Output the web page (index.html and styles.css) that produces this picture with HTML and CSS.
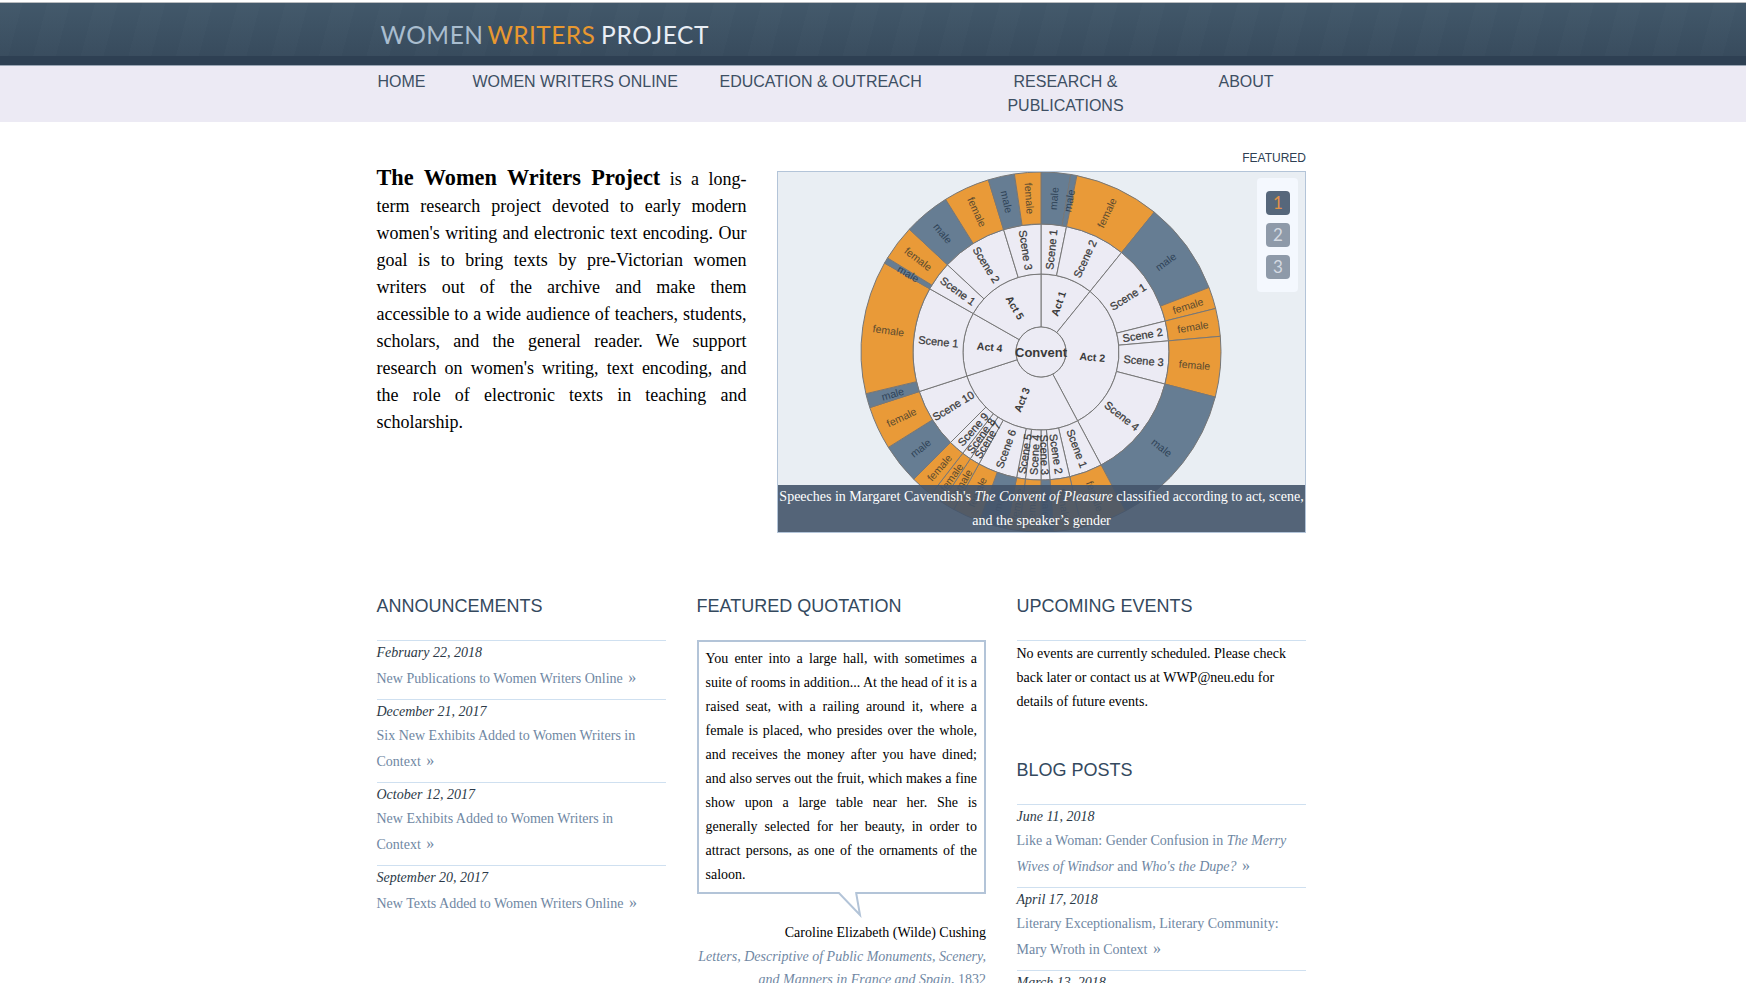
FILE: index.html
```html
<!DOCTYPE html>
<html>
<head>
  <meta charset="UTF-8">
  <title>Women Writers Project</title>
  <link rel="stylesheet" href="styles.css">
</head>
<body>
  <header class="masthead">
    <div class="wrap">
      <a class="logo" href="#"><span class="logo-women">WOMEN</span> <span class="logo-writers">WRITERS</span> <span class="logo-project">PROJECT</span></a>
    </div>
  </header>

  <nav class="main-nav">
    <ul class="wrap nav-list">
      <li><a href="#">HOME</a></li>
      <li><a href="#">WOMEN WRITERS ONLINE</a></li>
      <li><a href="#">EDUCATION &amp; OUTREACH</a></li>
      <li class="nav-wrapped"><a href="#">RESEARCH &amp; PUBLICATIONS</a></li>
      <li><a href="#">ABOUT</a></li>
    </ul>
  </nav>

  <main class="wrap">
    <section class="top-row">
      <p class="intro"><strong>The Women Writers Project</strong> is a long-term research project devoted to early modern women's writing and electronic text encoding. Our goal is to bring texts by pre-Victorian women writers out of the archive and make them accessible to a wide audience of teachers, students, scholars, and the general reader. We support research on women's writing, text encoding, and the role of electronic texts in teaching and scholarship.</p>

      <div class="featured">
        <div class="featured-label">FEATURED</div>
        <div class="slide">
          <svg id="sunburst" class="sunburst" width="527" height="360" viewBox="0 0 527 360"></svg>
          <div class="pager">
            <a class="pager-btn active" href="#">1</a>
            <a class="pager-btn" href="#">2</a>
            <a class="pager-btn" href="#">3</a>
          </div>
          <div class="caption">Speeches in Margaret Cavendish's <em>The Convent of Pleasure</em> classified according to act, scene, and the speaker’s gender</div>
        </div>
      </div>
    </section>

    <section class="columns">
      <div class="col">
        <h2>ANNOUNCEMENTS</h2>
        <div class="news-item">
          <div class="news-date">February 22, 2018</div>
          <a class="news-link news-short" href="#">New Publications to Women Writers Online&nbsp;<span class="more">»</span></a>
        </div>
        <div class="news-item">
          <div class="news-date">December 21, 2017</div>
          <a class="news-link" href="#">Six New Exhibits Added to Women Writers in Context&nbsp;<span class="more">»</span></a>
        </div>
        <div class="news-item">
          <div class="news-date">October 12, 2017</div>
          <a class="news-link" href="#">New Exhibits Added to Women Writers in Context&nbsp;<span class="more">»</span></a>
        </div>
        <div class="news-item">
          <div class="news-date">September 20, 2017</div>
          <a class="news-link news-short" href="#">New Texts Added to Women Writers Online&nbsp;<span class="more">»</span></a>
        </div>
      </div>

      <div class="col">
        <h2>FEATURED QUOTATION</h2>
        <div class="quote">
          You enter into a large hall, with sometimes a suite of rooms in addition... At the head of it is a raised seat, with a railing around it, where a female is placed, who presides over the whole, and receives the money after you have dined; and also serves out the fruit, which makes a fine show upon a large table near her. She is generally selected for her beauty, in order to attract persons, as one of the ornaments of the saloon.
          <svg class="quote-tail" width="24" height="26" viewBox="0 0 24 26"><path d="M0 0 L22 23 L18 0" fill="#fff" stroke="#b3c4d8" stroke-width="2"/></svg>
        </div>
        <div class="quote-author">Caroline Elizabeth (Wilde) Cushing</div>
        <div class="quote-source"><em>Letters, Descriptive of Public Monuments, Scenery, and Manners in France and Spain</em>, 1832</div>
      </div>

      <div class="col">
        <h2>UPCOMING EVENTS</h2>
        <p class="events">No events are currently scheduled. Please check back later or contact us at WWP@neu.edu for details of future events.</p>

        <h2 class="blog-head">BLOG POSTS</h2>
        <div class="news-item">
          <div class="news-date">June 11, 2018</div>
          <a class="news-link" href="#">Like a Woman: Gender Confusion in <em>The Merry Wives of Windsor</em> and <em>Who's the Dupe?</em>&nbsp;<span class="more">»</span></a>
        </div>
        <div class="news-item">
          <div class="news-date">April 17, 2018</div>
          <a class="news-link" href="#">Literary Exceptionalism, Literary Community: Mary Wroth in Context&nbsp;<span class="more">»</span></a>
        </div>
        <div class="news-item">
          <div class="news-date">March 13, 2018</div>
        </div>
      </div>
    </section>
  </main>

  <script src="sunburst.js"></script>
</body>
</html>
```

FILE: styles.css
```css
html {
  height: 100%;
  overflow: hidden;
}

body {
  margin: 0;
  background-color: #fff;
  color: #000;
  font-family: "Liberation Serif", serif;
}

a {
  text-decoration: none;
}

.wrap {
  width: 930.5px;
  margin-left: 376.5px;
}

/* header */

.masthead {
  height: 63px;
  border-top: 2px solid #fff;
  box-shadow: inset 0 1px 0 #b9bcbf, inset 0 -9px 0 #2e4053;
  background-color: #3c5062;
  background-image:
    repeating-linear-gradient(105deg, rgba(255, 255, 255, 0.012) 0 22px, rgba(255, 255, 255, 0) 22px 46px),
    linear-gradient(#42586a, #36495b);
}

.logo {
  display: block;
  padding-top: 18px;
  padding-left: 4px;
  font-family: Lato, sans-serif;
  font-size: 24.5px;
  line-height: 30px;
  letter-spacing: 0.65px;
  word-spacing: -3px;
  white-space: nowrap;
}

.logo-women { color: #a9bdcf; letter-spacing: 0.55px; }
.logo-writers { color: #e8982f; letter-spacing: 0.4px; }
.logo-project { color: #e9eef5; margin-left: 2px; }

/* nav */

.main-nav {
  height: 57px;
  border-top: 1px solid #9aa6b5;
  box-sizing: border-box;
  background-color: #eceaf4;
}

.nav-list {
  display: grid;
  grid-template-columns: 95px 247px 261px 238px auto;
  margin-top: 0;
  margin-bottom: 0;
  padding: 4px 0 0 1px;
  list-style: none;
  font-family: "Liberation Sans", sans-serif;
  font-size: 16px;
  line-height: 24px;
}

.nav-list a {
  color: #3d4f63;
}

.nav-wrapped {
  width: 170px;
  text-align: center;
}

/* intro + slideshow */

.top-row {
  display: flex;
  justify-content: space-between;
  padding-top: 27px;
}

.intro {
  width: 370px;
  margin: 15px 0 0;
  font-size: 18px;
  line-height: 27px;
  text-align: justify;
}

.intro strong {
  font-size: 22.3px;
}

.featured {
  width: 529px;
  margin-right: 1px;
}

.featured-label {
  margin: 1px 0 5px;
  font-family: "Liberation Sans", sans-serif;
  font-size: 12px;
  line-height: 16px;
  text-align: right;
  color: #2e4053;
}

.slide {
  position: relative;
  height: 360px;
  overflow: hidden;
  border: 1px solid #b3c4d8;
  background-color: #e9eef3;
}

.sunburst {
  display: block;
}

.sunburst text {
  font-family: "Liberation Sans", sans-serif;
  font-size: 10.5px;
  text-anchor: middle;
  dominant-baseline: central;
}

.sunburst .cell-male { fill: #667d93; }
.sunburst .cell-female { fill: #e99a38; }
.sunburst .cell-inner { fill: #ecebf4; }
.sunburst path { stroke: #777; stroke-width: 1; }

.sunburst .label-male { fill: #2f4357; }
.sunburst .label-female { fill: #5b4a2f; }
.sunburst .label-inner { fill: #3a3a3a; font-size: 11px; stroke: #3a3a3a; stroke-width: 0.25; }
.sunburst .label-act { fill: #3a3a3a; font-weight: bold; }
.sunburst .label-root { fill: #3a3a3a; font-weight: bold; font-size: 13px; }

.pager {
  position: absolute;
  top: 6px;
  right: 7px;
  display: flex;
  flex-direction: column;
  gap: 8px;
  padding: 13px 8px 13px 9px;
  border-radius: 4px;
  background-color: #f4f8fe;
}

.pager-btn {
  width: 24px;
  height: 24px;
  border-radius: 4px;
  font-family: Lato, sans-serif;
  font-size: 17px;
  line-height: 24px;
  text-align: center;
  color: #d5dbe3;
  background-color: #8e9aa9;
}

.pager-btn.active {
  color: #e0924a;
  background-color: #56677b;
}

.caption {
  position: absolute;
  left: 0;
  right: 0;
  bottom: -1px;
  font-size: 14px;
  line-height: 24px;
  text-align: center;
  color: #fff;
  background-color: rgba(68, 84, 106, 0.9);
}

/* three columns */

.columns {
  display: grid;
  grid-template-columns: repeat(3, 289.5px);
  column-gap: 30.5px;
  padding-top: 57px;
}

.col h2 {
  height: 50px;
  margin: 0;
  padding-top: 2px;
  box-sizing: border-box;
  font-family: "Liberation Sans", sans-serif;
  font-size: 18px;
  font-weight: normal;
  line-height: 28px;
  color: #34495e;
}

.news-item {
  padding-bottom: 8px;
  border-top: 1px solid #cfe0f0;
  font-size: 14px;
}

.news-date {
  font-style: italic;
  line-height: 23px;
  color: #2b3947;
}

.news-link {
  display: block;
  line-height: 25.5px;
  color: #6f87a3;
}

.news-short {
  padding-top: 1.5px;
}

.more {
  margin-left: 2px;
  font-size: 16px;
  line-height: 1;
}

.quote {
  position: relative;
  height: 254px;
  padding: 5px 7px;
  box-sizing: border-box;
  border: 2px solid #b3c4d8;
  font-size: 14px;
  line-height: 24px;
  text-align: justify;
}

.quote-tail {
  position: absolute;
  left: 139px;
  top: 250px;
}

.quote-author {
  margin-top: 27px;
  font-size: 14px;
  line-height: 24px;
  text-align: right;
}

.quote-source {
  font-size: 14px;
  line-height: 23px;
  text-align: right;
  color: #6f87a3;
}

.events {
  margin: 0;
  padding-top: 1px;
  border-top: 1px solid #cfe0f0;
  font-size: 14px;
  line-height: 24px;
}

.col .blog-head {
  margin-top: 40px;
}
```

FILE: sunburst.js
```js
// speeches in The Convent of Pleasure: act > scene > speaker gender
// angles are degrees clockwise from the top
const CX = 263
const CY = 180
const RADII = [25, 78, 128, 180]

const acts = [
  { name: 'Act 1', from: 0, to: 39, scenes: [
    { name: 'Scene 1', to: 11.5, parts: [['male', 9.5], ['male', 11.5]] },
    { name: 'Scene 2', to: 39, parts: [['female', 39]] }
  ]},
  { name: 'Act 2', from: 39, to: 152, scenes: [
    { name: 'Scene 1', to: 76, parts: [['male', 69], ['female', 76]] },
    { name: 'Scene 2', to: 85, parts: [['female', 85]] },
    { name: 'Scene 3', to: 104.5, parts: [['female', 104.5]] },
    { name: 'Scene 4', to: 152, parts: [['male', 152]] }
  ]},
  { name: 'Act 3', from: 152, to: 252, scenes: [
    { name: 'Scene 1', to: 167, parts: [['female', 167]] },
    { name: 'Scene 2', to: 176, parts: [['female', 176]] },
    { name: 'Scene 3', to: 180, parts: [['male', 180]] },
    { name: 'Scene 4', to: 187, parts: [['female', 187]] },
    { name: 'Scene 5', to: 191, parts: [['female', 191]] },
    { name: 'Scene 6', to: 209, parts: [['male', 200], ['female', 209]] },
    { name: 'Scene 7', to: 213.5, parts: [['female', 213.5]] },
    { name: 'Scene 8', to: 217.7, parts: [['female', 217.7]] },
    { name: 'Scene 9', to: 225, parts: [['female', 225]] },
    { name: 'Scene 10', to: 252, parts: [['male', 238], ['female', 252]] }
  ]},
  { name: 'Act 4', from: 252, to: 299.6, scenes: [
    { name: 'Scene 1', to: 299.6, parts: [['male', 256.6], ['female', 299.6]] }
  ]},
  { name: 'Act 5', from: 299.6, to: 360, scenes: [
    { name: 'Scene 1', to: 313, parts: [['male', 301.5], ['female', 313]] },
    { name: 'Scene 2', to: 343, parts: [['male', 328], ['female', 343]] },
    { name: 'Scene 3', to: 360, parts: [['male', 351.5], ['female', 360]] }
  ]}
]

const svg = document.getElementById('sunburst')
const cells = []
const labels = []

const point = (r, deg) => {
  const rad = deg * Math.PI / 180
  return (CX + r * Math.sin(rad)).toFixed(2) + ' ' + (CY - r * Math.cos(rad)).toFixed(2)
}

const addCell = (inner, outer, from, to, cls) => {
  const big = to - from > 180 ? 1 : 0
  const d = 'M' + point(inner, from) +
    ' A' + inner + ' ' + inner + ' 0 ' + big + ' 1 ' + point(inner, to) +
    ' L' + point(outer, to) +
    ' A' + outer + ' ' + outer + ' 0 ' + big + ' 0 ' + point(outer, from) + ' Z'
  cells.push('<path class="' + cls + '" d="' + d + '"/>')
}

const addLabel = (text, r, from, to, cls) => {
  const mid = (from + to) / 2
  const turn = mid < 180 ? mid - 90 : mid - 270
  const rad = mid * Math.PI / 180
  const x = (CX + r * Math.sin(rad)).toFixed(1)
  const y = (CY - r * Math.cos(rad)).toFixed(1)
  labels.push('<text class="' + cls + '" transform="translate(' + x + ' ' + y + ') rotate(' + turn.toFixed(1) + ')">' + text + '</text>')
}

acts.forEach(act => {
  addCell(RADII[0], RADII[1], act.from, act.to, 'cell-inner')
  addLabel(act.name, (RADII[0] + RADII[1]) / 2, act.from, act.to, 'label-act')
  let sceneFrom = act.from
  act.scenes.forEach(scene => {
    addCell(RADII[1], RADII[2], sceneFrom, scene.to, 'cell-inner')
    addLabel(scene.name, (RADII[1] + RADII[2]) / 2, sceneFrom, scene.to, 'label-inner')
    let partFrom = sceneFrom
    scene.parts.forEach(part => {
      addCell(RADII[2], RADII[3], partFrom, part[1], 'cell-' + part[0])
      addLabel(part[0], (RADII[2] + RADII[3]) / 2, partFrom, part[1], 'label-' + part[0])
      partFrom = part[1]
    })
    sceneFrom = scene.to
  })
})

cells.push('<circle cx="' + CX + '" cy="' + CY + '" r="' + RADII[0] + '" fill="#ecebf4" stroke="#777"/>')
labels.push('<text class="label-root" x="' + CX + '" y="' + CY + '">Convent</text>')

svg.innerHTML = cells.join('') + labels.join('')
```
